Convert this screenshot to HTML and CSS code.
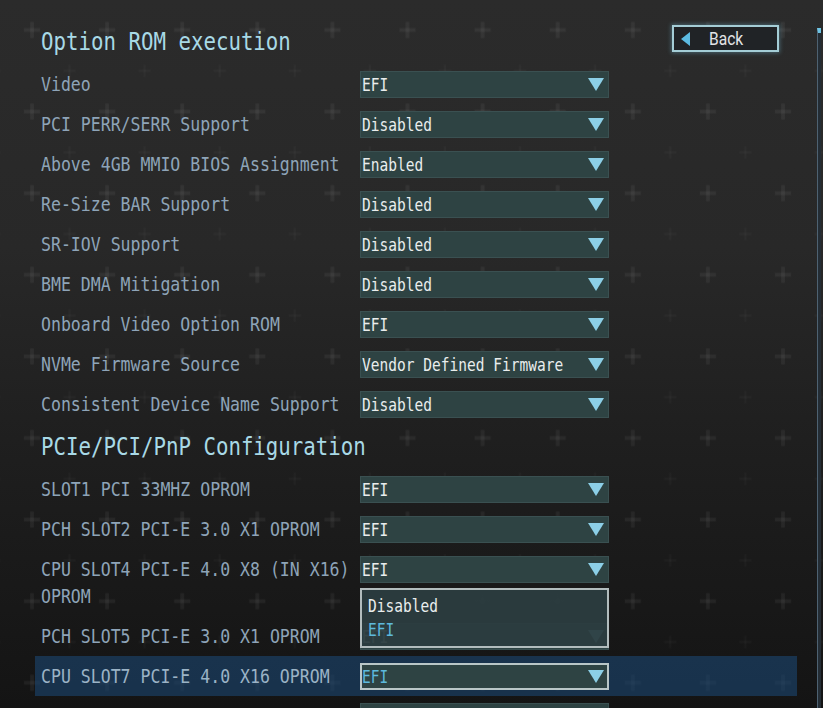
FILE: index.html
```html
<!DOCTYPE html>
<html>
<head>
<meta charset="utf-8">
<title>Option ROM execution</title>
<link rel="stylesheet" href="styles.css">
</head>
<body>
<div class="screen">
  <svg class="grid-bg" width="823" height="708" aria-hidden="true">
    <defs>
      <pattern id="plus" patternUnits="userSpaceOnUse" x="13.2" y="9.6" width="75.1" height="81.6">
        <rect x="10.8" y="18.6" width="16" height="3.6" fill="#ffffff" fill-opacity="0.05"/>
        <rect x="17" y="12.4" width="3.6" height="16" fill="#ffffff" fill-opacity="0.05"/>
        <rect x="50.3" y="60.2" width="12" height="2" fill="#ffffff" fill-opacity="0.025"/>
        <rect x="55.3" y="55.2" width="2" height="12" fill="#ffffff" fill-opacity="0.025"/>
      </pattern>
    </defs>
    <rect width="823" height="708" fill="url(#plus)"/>
  </svg>
  <div class="scrollbar"></div>

  <div class="content">
    <div class="section-head">
      <h2 class="title"><span class="sx sx-title">Option ROM execution</span></h2>
      <button class="back"><span class="back-arrow"></span><span class="sx sx-back">Back</span></button>
    </div>

    <div class="row"><div class="label"><span class="sx sx-label">Video</span></div><div class="select"><span class="sx sx-value">EFI</span><span class="arrow"></span></div></div>
    <div class="row"><div class="label"><span class="sx sx-label">PCI PERR/SERR Support</span></div><div class="select"><span class="sx sx-value">Disabled</span><span class="arrow"></span></div></div>
    <div class="row"><div class="label"><span class="sx sx-label">Above 4GB MMIO BIOS Assignment</span></div><div class="select"><span class="sx sx-value">Enabled</span><span class="arrow"></span></div></div>
    <div class="row"><div class="label"><span class="sx sx-label">Re-Size BAR Support</span></div><div class="select"><span class="sx sx-value">Disabled</span><span class="arrow"></span></div></div>
    <div class="row"><div class="label"><span class="sx sx-label">SR-IOV Support</span></div><div class="select"><span class="sx sx-value">Disabled</span><span class="arrow"></span></div></div>
    <div class="row"><div class="label"><span class="sx sx-label">BME DMA Mitigation</span></div><div class="select"><span class="sx sx-value">Disabled</span><span class="arrow"></span></div></div>
    <div class="row"><div class="label"><span class="sx sx-label">Onboard Video Option ROM</span></div><div class="select"><span class="sx sx-value">EFI</span><span class="arrow"></span></div></div>
    <div class="row"><div class="label"><span class="sx sx-label">NVMe Firmware Source</span></div><div class="select"><span class="sx sx-value">Vendor Defined Firmware</span><span class="arrow"></span></div></div>
    <div class="row"><div class="label"><span class="sx sx-label">Consistent Device Name Support</span></div><div class="select"><span class="sx sx-value">Disabled</span><span class="arrow"></span></div></div>

    <div class="section-head">
      <h2 class="title"><span class="sx sx-title">PCIe/PCI/PnP Configuration</span></h2>
    </div>

    <div class="row"><div class="label"><span class="sx sx-label">SLOT1 PCI 33MHZ OPROM</span></div><div class="select"><span class="sx sx-value">EFI</span><span class="arrow"></span></div></div>
    <div class="row"><div class="label"><span class="sx sx-label">PCH SLOT2 PCI-E 3.0 X1 OPROM</span></div><div class="select"><span class="sx sx-value">EFI</span><span class="arrow"></span></div></div>
    <div class="row"><div class="label"><span class="sx sx-label">CPU SLOT4 PCI-E 4.0 X8 (IN X16)<br>OPROM</span></div>
      <div class="select"><span class="sx sx-value">EFI</span><span class="arrow"></span>
        <div class="popup">
          <div class="opt"><span class="sx sx-value">Disabled</span></div>
          <div class="opt opt-current"><span class="sx sx-value">EFI</span></div>
        </div>
      </div>
    </div>
    <div class="row"><div class="label"><span class="sx sx-label">PCH SLOT5 PCI-E 3.0 X1 OPROM</span></div><div class="select"><span class="sx sx-value">EFI</span><span class="arrow"></span></div></div>
    <div class="row active"><div class="label"><span class="sx sx-label">CPU SLOT7 PCI-E 4.0 X16 OPROM</span></div><div class="select"><span class="sx sx-value">EFI</span><span class="arrow"></span></div></div>
    <div class="row"><div class="label"><span class="sx sx-label">PCH PCI-E X1 OPROM</span></div><div class="select"><span class="sx sx-value">EFI</span><span class="arrow"></span></div></div>
  </div>
</div>
</body>
</html>
```

FILE: styles.css
```css
* { box-sizing: border-box; }

html, body {
  margin: 0;
  padding: 0;
  background: #1a1a1a;
}

.screen {
  position: relative;
  width: 823px;
  height: 708px;
  overflow: hidden;
  background: linear-gradient(180deg, #2b2b2b 0%, #282828 35%, #1e1e1e 65%, #141414 100%);
  font-family: "DejaVu Sans Mono", "Liberation Mono", monospace;
}

.grid-bg {
  position: absolute;
  left: 0;
  top: 0;
  display: block;
}

.scrollbar {
  position: absolute;
  left: 817px;
  top: 28px;
  width: 4px;
  height: 690px;
  border-left: 1px solid #4e6272;
  background: #242d35;
  border-top: 5px solid #6ec4e4;
}

.content {
  position: relative;
  padding: 19px 26px 0 35px;
}

.sx {
  display: inline-block;
  white-space: nowrap;
  transform-origin: 0 50%;
}

.section-head {
  display: flex;
  align-items: flex-start;
  height: 45px;
  padding: 0 18px 0 6px;
}

.title {
  margin: 0;
  font-weight: normal;
  font-size: 25px;
  line-height: 45px;
  color: #a8d9e6;
}

.sx-title { transform: scaleX(0.83); }

.back {
  margin: 6px 0 0 auto;
  width: 107px;
  height: 27px;
  display: flex;
  align-items: center;
  padding: 0 0 0 7px;
  background: #202326;
  border: 2px solid #a4cdd6;
  box-shadow: 0 0 4px 1px rgba(120, 200, 225, 0.35);
  color: #e2e4e6;
  font-family: "Roboto", "DejaVu Sans", sans-serif;
  font-size: 19px;
  line-height: 23px;
  cursor: pointer;
}

.back-arrow {
  width: 0;
  height: 0;
  border-top: 7px solid transparent;
  border-bottom: 7px solid transparent;
  border-right: 9px solid #5cbbe2;
  margin-right: 19px;
}

.sx-back { transform: scaleX(0.82); }

.row {
  display: grid;
  grid-template-columns: 319px 249px;
  align-items: start;
  padding: 6.5px 0 6.5px 6px;
}

.row.active {
  background: rgba(28, 72, 118, 0.58);
}

.label {
  font-size: 19px;
  line-height: 27px;
  color: #8ea4b8;
}

.active .label { color: #9bb3c6; }

.sx-label { transform: scaleX(0.87); }

.select {
  position: relative;
  height: 27px;
  display: flex;
  align-items: center;
  padding-left: 1px;
  background: #2e4343;
  border: 1px solid #3a5051;
  font-size: 18px;
  line-height: 25px;
  color: #e9eded;
}

.sx-value {
  width: 0;
  overflow: visible;
  transform: scaleX(0.807);
}

.active .select {
  border: 2px solid #b9c6c7;
  padding-left: 0;
  color: #5db9dd;
}

.arrow {
  margin-left: auto;
  margin-right: 4px;
  width: 0;
  height: 0;
  border-left: 8px solid transparent;
  border-right: 8px solid transparent;
  border-top: 13px solid #8ccfe7;
}

.active .arrow { margin-right: 3px; }

.popup {
  position: absolute;
  left: -1px;
  top: 31px;
  width: 249px;
  height: 60px;
  padding: 4px 0 0 6px;
  border: 2px solid #b2bcbd;
  background: rgba(43, 60, 63, 0.95);
  z-index: 2;
}

.opt {
  height: 24px;
  line-height: 24px;
  color: #e9eded;
}

.opt-current { color: #5db9dd; }
```
